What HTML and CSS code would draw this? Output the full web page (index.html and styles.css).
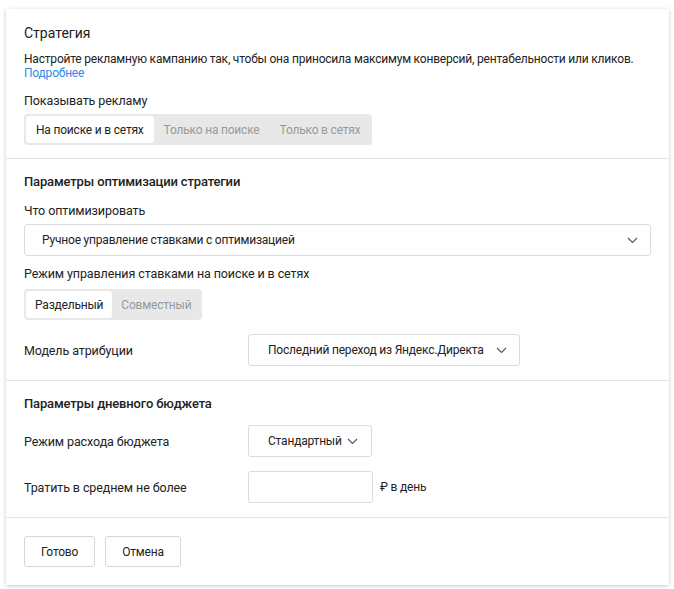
FILE: index.html
```html
<!DOCTYPE html>
<html lang="ru">
<head>
<meta charset="utf-8">
<link rel="stylesheet" href="styles.css">
</head>
<body>
<div class="card">
  <section class="sec sec-first">
    <h1 class="title">Стратегия</h1>
    <p class="desc">Настройте рекламную кампанию так, чтобы она приносила максимум конверсий, рентабельности или кликов.<br><a class="link" href="#">Подробнее</a></p>
    <div class="label">Показывать рекламу</div>
    <div class="seg">
      <span class="seg-item active">На поиске и в сетях</span>
      <span class="seg-item">Только на поиске</span>
      <span class="seg-item">Только в сетях</span>
    </div>
  </section>
  <section class="sec">
    <h2 class="subtitle">Параметры оптимизации стратегии</h2>
    <div class="label">Что оптимизировать</div>
    <div class="select select-wide">
      <span>Ручное управление ставками с оптимизацией</span>
      <svg class="chev" width="11" height="7" viewBox="0 0 11 7"><path d="M1 1l4.5 4.5L10 1" fill="none" stroke="#555" stroke-width="1.1"/></svg>
    </div>
    <div class="label label-mt">Режим управления ставками на поиске и в сетях</div>
    <div class="seg seg-compact">
      <span class="seg-item active">Раздельный</span>
      <span class="seg-item">Совместный</span>
    </div>
    <div class="row row-mt">
      <div class="row-label">Модель атрибуции</div>
      <div class="select">
        <span>Последний переход из Яндекс.Директа</span>
        <svg class="chev" width="11" height="7" viewBox="0 0 11 7"><path d="M1 1l4.5 4.5L10 1" fill="none" stroke="#555" stroke-width="1.1"/></svg>
      </div>
    </div>
  </section>
  <section class="sec">
    <h2 class="subtitle">Параметры дневного бюджета</h2>
    <div class="row row-first">
      <div class="row-label">Режим расхода бюджета</div>
      <div class="select select-tight">
        <span>Стандартный</span>
        <svg class="chev" width="11" height="7" viewBox="0 0 11 7"><path d="M1 1l4.5 4.5L10 1" fill="none" stroke="#555" stroke-width="1.1"/></svg>
      </div>
    </div>
    <div class="row row-mt">
      <div class="row-label">Тратить в среднем не более</div>
      <div class="input"></div>
      <span class="unit">₽ в день</span>
    </div>
  </section>
  <footer class="footer">
    <button class="btn btn-ok">Готово</button>
    <button class="btn btn-cancel">Отмена</button>
  </footer>
</div>
</body>
</html>
```
FILE: styles.css
```css
* { box-sizing: border-box; }
html, body { margin: 0; padding: 0; background: #fff; }
body {
  font-family: Roboto, "Noto Sans", "Liberation Sans", sans-serif;
  font-size: 12px;
  letter-spacing: -0.2px;
  color: #222;
  width: 674px;
  height: 589px;
  overflow: hidden;
}
.card {
  margin: 9px 0 0 6px;
  width: 663px;
  height: 576px;
  background: #fff;
  box-shadow: 0 1px 4px rgba(0,0,0,0.22);
}
.sec {
  padding: 15px 18px 14px 18px;
  border-bottom: 1px solid #e3e3e3;
}
.sec-first { padding-top: 14px; padding-bottom: 13px; }
.title {
  margin: 0;
  font-size: 14px;
  font-weight: 400;
  letter-spacing: 0;
  line-height: 20px;
  color: #222;
}
.desc {
  margin: 9px 0 13px;
  line-height: 14px;
  font-size: 12px;
}
.link { color: #2e8be6; text-decoration: none; }
.label {
  line-height: 16px;
  font-size: 12.5px;
  letter-spacing: -0.1px;
  margin-bottom: 5px;
}
.label-mt { margin-top: 10px; margin-bottom: 7px; }
.subtitle {
  margin: 0 0 13px;
  font-size: 13px;
  font-weight: 500;
  letter-spacing: -0.15px;
  line-height: 16px;
}
.seg {
  display: inline-flex;
  background: #e8e8e8;
  border-radius: 4px;
  padding: 2px;
  height: 31px;
}
.seg-item {
  display: flex;
  align-items: center;
  padding: 0 10px;
  color: #999;
  font-size: 12px;
  border-radius: 3px;
}
.seg-compact .seg-item { padding: 0 9px; }
.seg-item.active { background: #fff; color: #222; }
.select {
  display: inline-flex;
  align-items: center;
  height: 32px;
  border: 1px solid #dcdcdc;
  border-radius: 3px;
  padding: 0 12px 0 19px;
  gap: 12px;
  background: #fff;
}
.select-tight { gap: 5px; padding-right: 13px; }
.select-wide {
  display: flex;
  justify-content: space-between;
  width: 627px;
  padding-left: 17px;
}
.chev { display: block; }
.row { display: flex; align-items: center; }
.row-mt { margin-top: 14px; }
.row-first { margin-top: 13px; }
.row-label { width: 224px; font-size: 12.5px; letter-spacing: -0.1px; }
.input {
  width: 125px;
  height: 32px;
  border: 1px solid #dcdcdc;
  border-radius: 3px;
}
.unit { margin-left: 7px; font-size: 12px; }
.footer {
  padding: 18px 18px;
  display: flex;
  gap: 10px;
}
.btn {
  font-family: inherit;
  font-size: 12px;
  letter-spacing: -0.2px;
  color: #222;
  background: #fff;
  border: 1px solid #d6d6d6;
  border-radius: 3px;
  height: 31px;
  padding: 0 16px;
}
```
